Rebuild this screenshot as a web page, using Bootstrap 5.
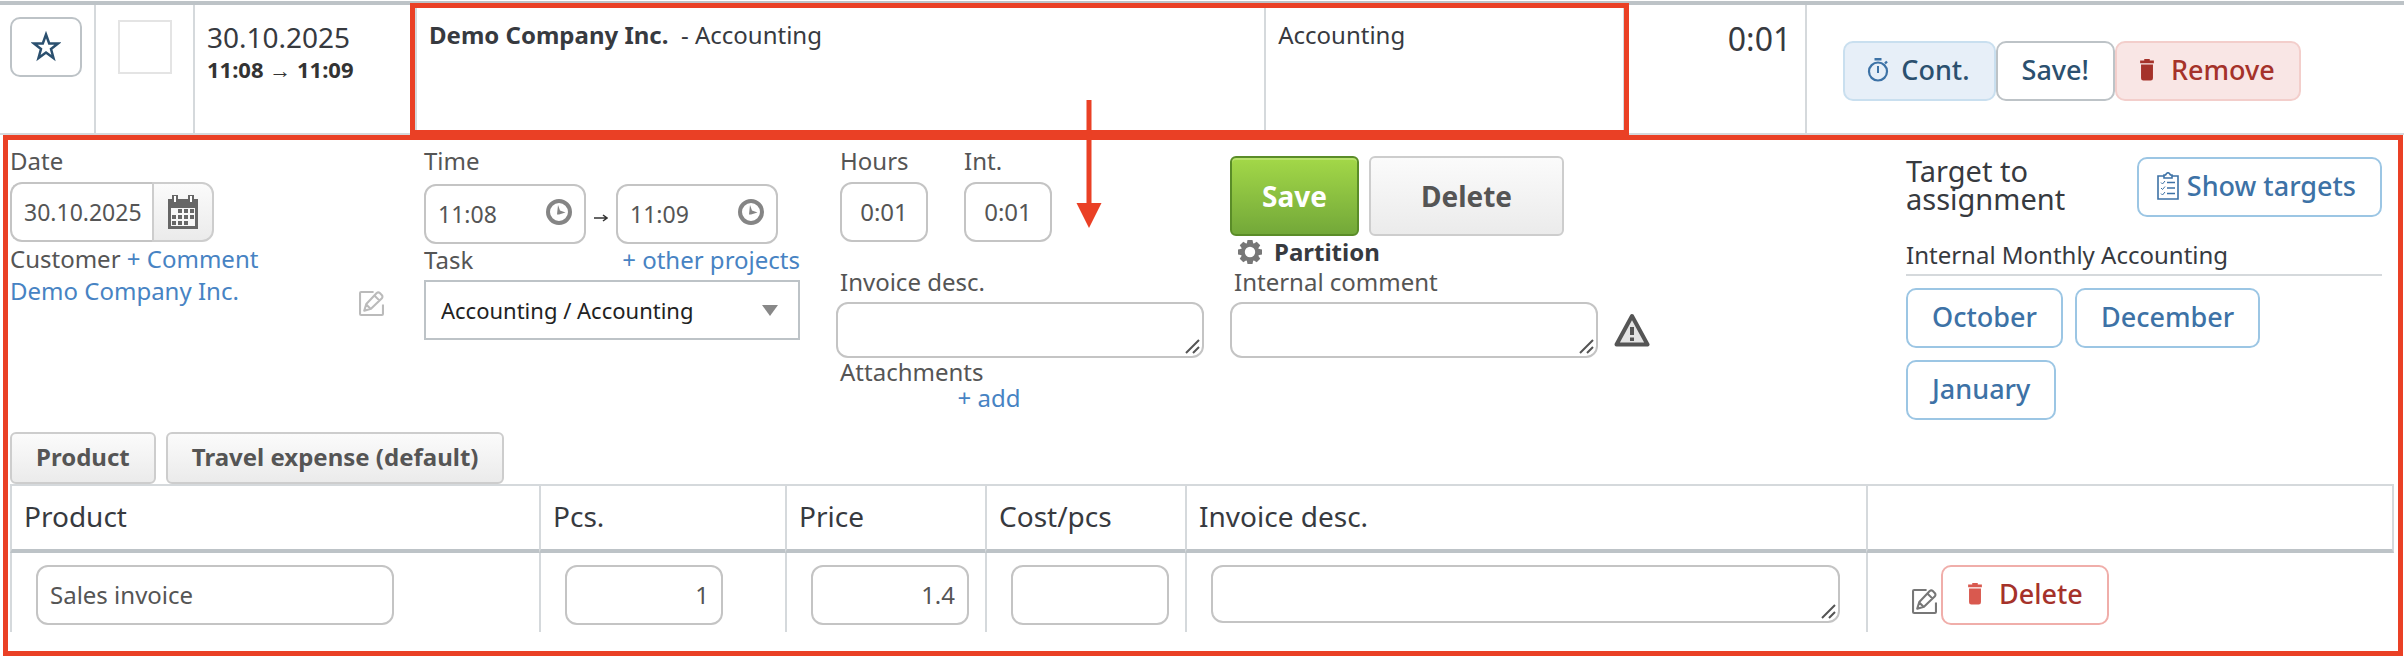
<!DOCTYPE html>
<html lang="en">
<head>
<meta charset="utf-8">
<meta name="viewport" content="width=device-width, initial-scale=1">
<title>Hour entry</title>
<link href="https://cdn.jsdelivr.net/npm/bootstrap@5.3.0/dist/css/bootstrap.min.css" rel="stylesheet">
<style>
:root { --ink:#373a3f; --soft:#555; --line:#d5d9dc; --rule:#bdc3c7; --link:#4783c3; --mark-red:#ea4025; }
body { font-family:"Noto Sans",sans-serif; font-size:24px; line-height:32px; color:var(--ink); background:#fff; }
a { color:var(--link); text-decoration:none; }
svg { display:block; flex:none; }
button { font-family:inherit; }

/* entry summary */
.entry { display:grid; grid-template-columns:96px 99px 222px 849fr 360fr 182fr 597fr; margin-top:1px; border-top:4px solid var(--rule); border-bottom:2px solid var(--line); min-height:134px; position:relative; }
.entry > div { border-right:2px solid var(--line); min-width:0; }
.entry > div:last-of-type { border-right:0; }
.entry-main { grid-column:4 / 6; display:grid; grid-template-columns:849fr 360fr; position:relative; }
.entry-main > div + div { border-left:2px solid var(--line); }
.entry-main > div { padding:14px 12px; }
.entry-main::after { content:""; position:absolute; inset:-2px -6px -2px -7px; border:5px solid var(--mark-red); pointer-events:none; }
.star-btn { width:72px; height:60px; margin:12px 0 0 10px; border:2px solid var(--rule); border-radius:10px; background:#fff; color:#2b506f; }
.pick { appearance:none; display:block; width:54px; height:54px; margin:15px 0 0 22px; border:2px solid #e4e4e4; background:#fff; }
.day { font-size:28px; line-height:36px; padding-top:14px; }
.clocked { font-size:22px; line-height:28px; font-weight:700; color:#333; }
.total { font-size:32px; line-height:40px; padding:14px 14px 0 0; }
.actions { padding:36px 0 0 12px; }
.flow-arrow { position:absolute; left:45.28%; top:95px; transform:translateX(-50%); z-index:2; }

/* buttons */
.ui-btn { display:inline-flex; align-items:center; height:60px; border:2px solid var(--rule); border-radius:10px; padding:0 24px 2px; background:#fff; font-size:27px; line-height:36px; font-weight:500; color:#2b506f; white-space:nowrap; }
.ui-btn.cont { background:#e7eff8; border-color:#c9dfef; padding-left:22px; }
.ui-btn.rem { background:#f9e6e5; border-color:#f3cecb; color:#a5322a; padding-left:22px; }
.ui-btn.blue { border-color:#9cc6e4; color:#3d72a6; }
.ui-btn.show-targets { padding-left:18px; }
.ui-btn.del { border-color:#f0aeaa; color:#a5322a; }
.grey-btn { border:2px solid #cdcdcd; border-radius:6px; background:linear-gradient(#fbfbfb,#ebebeb); color:var(--soft); font-weight:700; }
.big-btn { height:80px; font-size:28px; }
.big-btn.grey-btn { width:195px; }
.save-btn { width:129px; border:2px solid #5a8c28; border-radius:6px; color:#fff; font-weight:700; background:linear-gradient(#a3d848,#73a839); box-shadow:inset 0 2px 0 #b9e26d; }
.tab-btn { height:52px; padding:0 24px 2px; font-size:24px; }

/* edit panel */
.edit-panel { margin:0 1px 0 3px; border:5px solid var(--mark-red); padding:5px 4px 19px 2px; }
.fields { display:grid; grid-template-columns:414fr 412fr 394fr 676fr 476fr; padding-right:12px; min-height:275px; }
.fields > div { min-width:0; }
label, .cap { color:var(--soft); display:block; }
.lead-label { margin-bottom:5px; }
.tight { line-height:28px; }
.comment-label { margin-bottom:6px; }
.field { font-family:inherit; border:2px solid #c4c4c4; border-radius:12px; height:60px; color:var(--soft); font-size:24px; line-height:32px; background:#fff; padding:0 12px 2px; }
textarea.field { height:56px; resize:none; display:block; background:#fff url("data:image/svg+xml,%3Csvg xmlns='http://www.w3.org/2000/svg' width='16' height='16'%3E%3Cpath d='M1 14L14 1M8 14L14 8' stroke='%23555' stroke-width='2'/%3E%3C/svg%3E") no-repeat right 1px bottom 1px; }
.field.note { width:368px; }
.date-group .field { width:142px; border-radius:12px 0 0 12px; border-right:0; padding:0 0 0 12px; font-size:23px; }
.date-group button { width:62px; height:60px; border:2px solid #cdcdcd; border-radius:0 12px 12px 0; background:linear-gradient(#fbfbfb,#ebebeb); padding:0 0 0 13px; }
.customer-row { margin-top:1px; }
.time-row { margin-top:7px; }
.time-box { position:relative; width:162px; }
.time-box .field { display:block; width:100%; font-size:23px; padding:0 12px; }
.time-box svg { position:absolute; right:14px; top:15px; }
.field.narrow { display:block; width:88px; text-align:center; padding:0 0 2px; }
.task-col { width:376px; }
.task-select { display:block; appearance:none; width:100%; height:60px; border:2px solid var(--rule); border-radius:0; padding:0 15px; color:#222; font-family:inherit; font-size:22px; background:#fff url("data:image/svg+xml,%3Csvg xmlns='http://www.w3.org/2000/svg' width='16' height='11'%3E%3Cpath d='M0 0H16L8 11z' fill='%23888'/%3E%3C/svg%3E") no-repeat right 20px center; }
.add-link { display:block; width:306px; line-height:24px; text-align:center; }
.main-actions { gap:10px; padding-top:11px; }
.target-head { padding-top:12px; margin-bottom:20px; }
.target-title { font-size:29px; line-height:28px; font-weight:400; width:200px; }
.target-name { border-bottom:2px solid var(--line); padding:2px 0 3px; }
.months { gap:12px; padding-top:12px; }
.tabs { gap:10px; padding-top:12px; }

/* product lines */
.lines { table-layout:fixed; width:100%; border-collapse:separate; border-spacing:0; }
.lines th { font-size:28px; line-height:42px; font-weight:400; padding:9px 0 12px 12px; border-top:2px solid var(--line); border-bottom:4px solid var(--rule); border-left:2px solid var(--line); }
.lines th:last-child { border-right:2px solid var(--line); }
.lines td { padding:12px 26px 7px 24px; height:79px; border-left:2px solid var(--line); vertical-align:top; }
.lines .field { display:block; }
.lines textarea.field { height:58px; width:100%; }
.product-name { width:358px; }
.num { width:158px; text-align:right; }
</style>
</head>
<body>
<svg width="0" height="0" class="position-absolute" aria-hidden="true">
  <symbol id="i-edit" viewBox="0 0 24 24"><path d="M14 1H2Q1 1 1 2V22Q1 23 2 23H22Q23 23 23 22V13M5 19L7 12.500L17 2Q18.500 .7 20 2L22 4Q23 5.500 22 7L11.500 17ZM15 4.500L19.500 9M7 13L11 17" fill="none" stroke="currentColor" stroke-width="2" stroke-linejoin="round"/></symbol>
  <symbol id="i-bin" viewBox="0 0 16 24"><path d="M5 0H11V1.500H15.500V4.500H.5V1.500H5ZM1.500 6H14.500V21Q14.500 23.500 12 23.500H4Q1.500 23.500 1.500 21Z" fill="currentColor"/></symbol>
  <symbol id="i-clock" viewBox="0 0 26 26"><circle cx="13" cy="13" r="11" fill="none" stroke="#858585" stroke-width="4"/><path d="M12 6L14 11.500L19.500 13.500L13 15.500H11Z" fill="#858585"/></symbol>
</svg>

<section class="entry">
  <div><button class="star-btn d-flex align-items-center justify-content-center p-0" type="button" aria-label="Favourite"><svg width="30" height="32" viewBox="0 0 30 32"><path d="M15 3.500L18.200 12.500H27L20 18L22.500 27L15 21.500L7.500 27L10 18L3 12.500H11.800Z" fill="none" stroke="currentColor" stroke-width="2.500"/></svg></button></div>
  <div><input class="pick" type="checkbox" aria-label="Select entry"></div>
  <div class="ps-2">
    <div class="day ms-1">30.10.2025</div>
    <div class="clocked ms-1">11:08 → 11:09</div>
  </div>
  <div class="entry-main">
    <div><strong>Demo Company Inc.</strong>&nbsp; - Accounting</div>
    <div>Accounting</div>
  </div>
  <div class="total text-end">0:01</div>
  <div class="ps-4">
    <div class="actions d-flex">
      <button class="ui-btn cont gap-2" type="button"><svg width="22" height="24" viewBox="0 0 22 24"><path d="M7.500 1.200H14.500M18 5.500L20 3.500" stroke="#3d72a6" stroke-width="2.400"/><circle cx="11" cy="13.500" r="9" fill="none" stroke="#3d72a6" stroke-width="2.200"/><path d="M11 8V15" stroke="#3d72a6" stroke-width="2"/></svg><span class="ps-1">Cont.</span></button>
      <button class="ui-btn" type="button">Save!</button>
      <button class="ui-btn rem gap-3" type="button"><svg width="16" height="22"><use href="#i-bin"/></svg>Remove</button>
    </div>
  </div>
  <svg class="flow-arrow" width="26" height="128" viewBox="0 0 26 128"><path d="M10.500 0H15.500V103H25.500L13 128L.5 103H10.500Z" fill="#ea4025"/></svg>
</section>

<form class="edit-panel">
  <div class="fields">
    <div>
      <label for="date" class="lead-label">Date</label>
      <div class="date-group d-flex">
        <input class="field" id="date" value="30.10.2025">
        <button type="button" aria-label="Open calendar"><svg width="32" height="34" viewBox="0 0 32 34"><path d="M1 4H31V34H1Z" fill="#666"/><path d="M4 13H28V31H4Z" fill="#f7f7f7"/><path d="M6 0H10V8H6ZM22 0H26V8H22Z" fill="#fff" stroke="#666" stroke-width="2"/><path d="M11 14h4v4h-4zM17 14h4v4h-4zM23 14h4v4h-4zM5 20h4v4h-4zM11 20h4v4h-4zM17 20h4v4h-4zM23 20h4v4h-4zM5 26h4v4h-4zM11 26h4v4h-4zM17 26h4v4h-4z" fill="#666"/></svg></button>
      </div>
      <div class="customer-row"><span class="cap d-inline">Customer</span> <a href="#">+ Comment</a></div>
      <div class="d-flex justify-content-between"><a href="#">Demo Company Inc.</a><a class="mt-3 me-4 pe-3" href="#" aria-label="Edit customer"><svg width="25" height="25" color="#bbb"><use href="#i-edit"/></svg></a></div>
    </div>
    <div>
      <div class="task-col">
        <label for="from">Time</label>
        <div class="time-row d-flex align-items-center">
          <div class="time-box"><input class="field" id="from" value="11:08"><svg width="26" height="26"><use href="#i-clock"/></svg></div>
          <svg class="mx-2 mt-2" width="14" height="10" viewBox="0 0 14 10"><path d="M0 5H13M9 2L13 5L9 8" stroke="#333" stroke-width="1.500" fill="none"/></svg>
          <div class="time-box"><input class="field" aria-label="End time" value="11:09"><svg width="26" height="26"><use href="#i-clock"/></svg></div>
        </div>
        <div class="d-flex justify-content-between mb-1"><label for="task">Task</label><a href="#">+ other projects</a></div>
        <select class="task-select" id="task"><option>Accounting / Accounting</option></select>
      </div>
    </div>
    <div>
      <div class="d-flex ms-1 mb-4">
        <div class="me-4 pe-2"><label for="hours" class="lead-label">Hours</label><input class="field narrow" id="hours" value="0:01"></div>
        <div class="ms-1"><label for="int" class="lead-label">Int.</label><input class="field narrow" id="int" value="0:01"></div>
      </div>
      <label for="desc" class="ms-1 pb-1">Invoice desc.</label>
      <textarea class="field note" id="desc"></textarea>
      <div class="cap tight ms-1">Attachments</div>
      <a class="add-link" href="#">+ add</a>
    </div>
    <div>
      <div class="main-actions d-flex">
        <button class="save-btn big-btn" type="submit">Save</button>
        <button class="grey-btn big-btn" type="button">Delete</button>
      </div>
      <div class="d-flex align-items-center ps-1"><svg class="ms-1" width="24" height="24" viewBox="-12 -12 24 24"><g fill="#777"><path id="cog" d="M-2.500-12H2.500L3.500-7H-3.500ZM-2.500 12H2.500L3.500 7H-3.500Z"/><use href="#cog" transform="rotate(45)"/><use href="#cog" transform="rotate(90)"/><use href="#cog" transform="rotate(135)"/></g><circle r="7.200" fill="none" stroke="#777" stroke-width="4"/></svg><strong class="ps-2 ms-1">Partition</strong></div>
      <label for="comment" class="comment-label tight ms-1">Internal comment</label>
      <div class="d-flex align-items-center">
        <textarea class="field note" id="comment"></textarea>
        <svg class="ms-3" width="36" height="34" viewBox="0 0 36 34"><path d="M18 3L33.500 31.500H2.500Z" fill="#e4e4e4" stroke="#555" stroke-width="4" stroke-linejoin="round"/><path d="M18 14V22M18 24.500V28" stroke="#555" stroke-width="4"/></svg>
      </div>
    </div>
    <div>
      <div class="target-head d-flex justify-content-between">
        <h2 class="target-title m-0">Target to assignment</h2>
        <button class="ui-btn blue show-targets" type="button"><svg class="me-2" width="22" height="28" viewBox="0 0 22 28"><path d="M7 4H1V27H21V4H15M7 6V3H8.500Q11-1.500 13.500 3H15V6Z" fill="none" stroke="currentColor" stroke-width="1.600"/><path d="M10 10.500H18M10 16H18M10 21.500H18" stroke="currentColor" stroke-width="1.600"/><path d="M4 10.500L5.500 12L8 9M4 16L5.500 17.500L8 14.500M4 21.500L5.500 23L8 20" fill="none" stroke="currentColor"/></svg>Show targets</button>
      </div>
      <div class="target-name">Internal Monthly Accounting</div>
      <div class="months d-flex flex-wrap">
        <button class="ui-btn blue" type="button">October</button>
        <button class="ui-btn blue" type="button">December</button>
        <button class="ui-btn blue" type="button">January</button>
      </div>
    </div>
  </div>

  <div class="tabs d-flex">
    <button class="grey-btn tab-btn" type="button">Product</button>
    <button class="grey-btn tab-btn" type="button">Travel expense (default)</button>
  </div>
  <table class="lines">
    <colgroup><col style="width:22.19%"><col style="width:10.32%"><col style="width:8.39%"><col style="width:8.39%"><col style="width:28.56%"><col></colgroup>
    <thead><tr><th>Product</th><th>Pcs.</th><th>Price</th><th>Cost/pcs</th><th>Invoice desc.</th><th></th></tr></thead>
    <tbody><tr>
      <td><input class="field product-name" aria-label="Product" value="Sales invoice"></td>
      <td><input class="field num" aria-label="Pcs." value="1"></td>
      <td><input class="field num" aria-label="Price" value="1.4"></td>
      <td><input class="field num" aria-label="Cost per piece"></td>
      <td><textarea class="field" aria-label="Invoice description"></textarea></td>
      <td><div class="d-flex ps-3 ms-1"><a class="mt-4 me-1" href="#" aria-label="Edit line"><svg width="25" height="25" color="#777"><use href="#i-edit"/></svg></a><button class="ui-btn del gap-3" type="button"><svg width="16" height="22" color="#d9594f"><use href="#i-bin"/></svg>Delete</button></div></td>
    </tr></tbody>
  </table>
</form>
<script src="https://cdn.jsdelivr.net/npm/bootstrap@5.3.0/dist/js/bootstrap.bundle.min.js"></script>
</body>
</html>
